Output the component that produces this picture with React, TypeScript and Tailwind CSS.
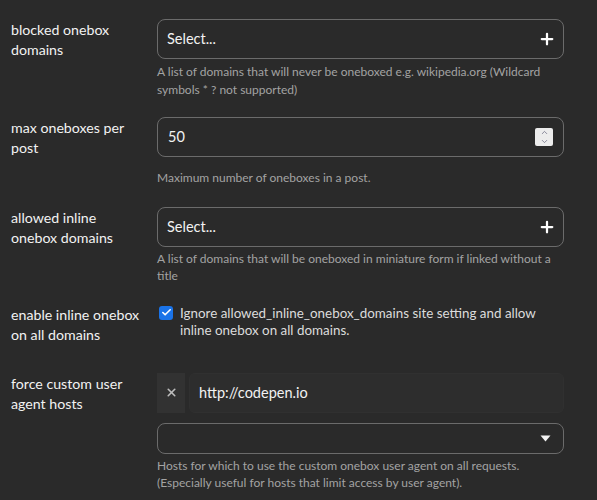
import { Plus, X, Check, ChevronUp, ChevronDown } from 'lucide-react';

const font = "font-['Lato','Noto_Sans',sans-serif]";

const Label = ({ children }: { children: React.ReactNode }) => (
  <div className="w-[157px] shrink-0 pl-[11px] pr-[16px] pt-[1px] text-[14.2px] leading-[20px] text-[#f2f2f2]">{children}</div>
);

const Help = ({ children, className = '' }: { children: React.ReactNode; className?: string }) => (
  <p className={`text-[12px] leading-[17.5px] text-[#a3a3a3] ${className}`}>{children}</p>
);

const SelectBox = () => (
  <div className="flex h-[40px] items-center justify-between rounded-[8px] border border-[#6b6b6b] pl-[9px] pr-[7px]">
    <span className="text-[14.5px] text-[#f2f2f2]">Select...</span>
    <Plus size={18} strokeWidth={3} className="text-white" />
  </div>
);

export default function App() {
  return (
    <div className={`h-[500px] w-[597px] overflow-hidden bg-[#2a2a2a] pt-[19px] ${font}`}>
      <div className="flex">
        <Label>blocked onebox domains</Label>
        <div className="w-[407px]">
          <SelectBox />
          <Help className="mt-[4px]">
            A list of domains that will never be oneboxed e.g. wikipedia.org (Wildcard symbols * ? not supported)
          </Help>
        </div>
      </div>

      <div className="mt-[19px] flex">
        <Label>max oneboxes per post</Label>
        <div className="w-[407px]">
          <div className="flex h-[40px] items-center justify-between rounded-[8px] border border-[#6b6b6b] pl-[10px] pr-[10px]">
            <span className="text-[14.5px] text-[#f2f2f2]">50</span>
            <div className="flex h-[18px] w-[18px] flex-col items-center justify-center rounded-[2px] bg-[#ececec] text-[#6a6a80]">
              <ChevronUp size={9} strokeWidth={2} />
              <ChevronDown size={9} strokeWidth={2} />
            </div>
          </div>
          <Help className="mt-[12px]">Maximum number of oneboxes in a post.</Help>
        </div>
      </div>

      <div className="mt-[20px] flex">
        <Label>allowed inline onebox domains</Label>
        <div className="w-[407px]">
          <SelectBox />
          <Help className="mt-[3px]">
            A list of domains that will be oneboxed in miniature form if linked without a title
          </Help>
        </div>
      </div>

      <div className="mt-[19px] flex">
        <Label>enable inline onebox on all domains</Label>
        <div className="flex w-[407px] gap-[7px] pl-[2px] pt-[1px]">
          <div className="mt-[1px] flex h-[14px] w-[14px] shrink-0 items-center justify-center rounded-[3px] bg-[#1a73e8]">
            <Check size={11} strokeWidth={3.5} className="text-white" />
          </div>
          <span className="text-[13.4px] leading-[17px] text-[#dcdcdc]">
            Ignore allowed_inline_onebox_domains site setting and allow inline onebox on all domains.
          </span>
        </div>
      </div>

      <div className="mt-[28px] flex">
        <Label>force custom user agent hosts</Label>
        <div className="w-[407px]">
          <div className="flex gap-[4px]">
            <div className="flex h-[40px] w-[28px] items-center justify-center bg-[#323232]">
              <X size={13} strokeWidth={3} className="text-[#bdbdbd]" />
            </div>
            <div className="flex h-[40px] flex-1 items-center rounded-[6px] border border-[#303030] bg-[#2d2d2d] px-[9px]">
              <span className="text-[14.5px] text-[#f2f2f2]">http://codepen.io</span>
            </div>
          </div>
          <div className="mt-[10px] flex h-[31px] items-center justify-end rounded-[8px] border border-[#6b6b6b] pr-[12px]">
            <svg width="11" height="7" viewBox="0 0 11 7">
              <path d="M0.5 0.5 L10.5 0.5 L5.5 6.5 Z" fill="#f2f2f2" />
            </svg>
          </div>
          <Help className="mt-[3px]">
            Hosts for which to use the custom onebox user agent on all requests. (Especially useful for hosts that limit access by user agent).
          </Help>
        </div>
      </div>
    </div>
  );
}
